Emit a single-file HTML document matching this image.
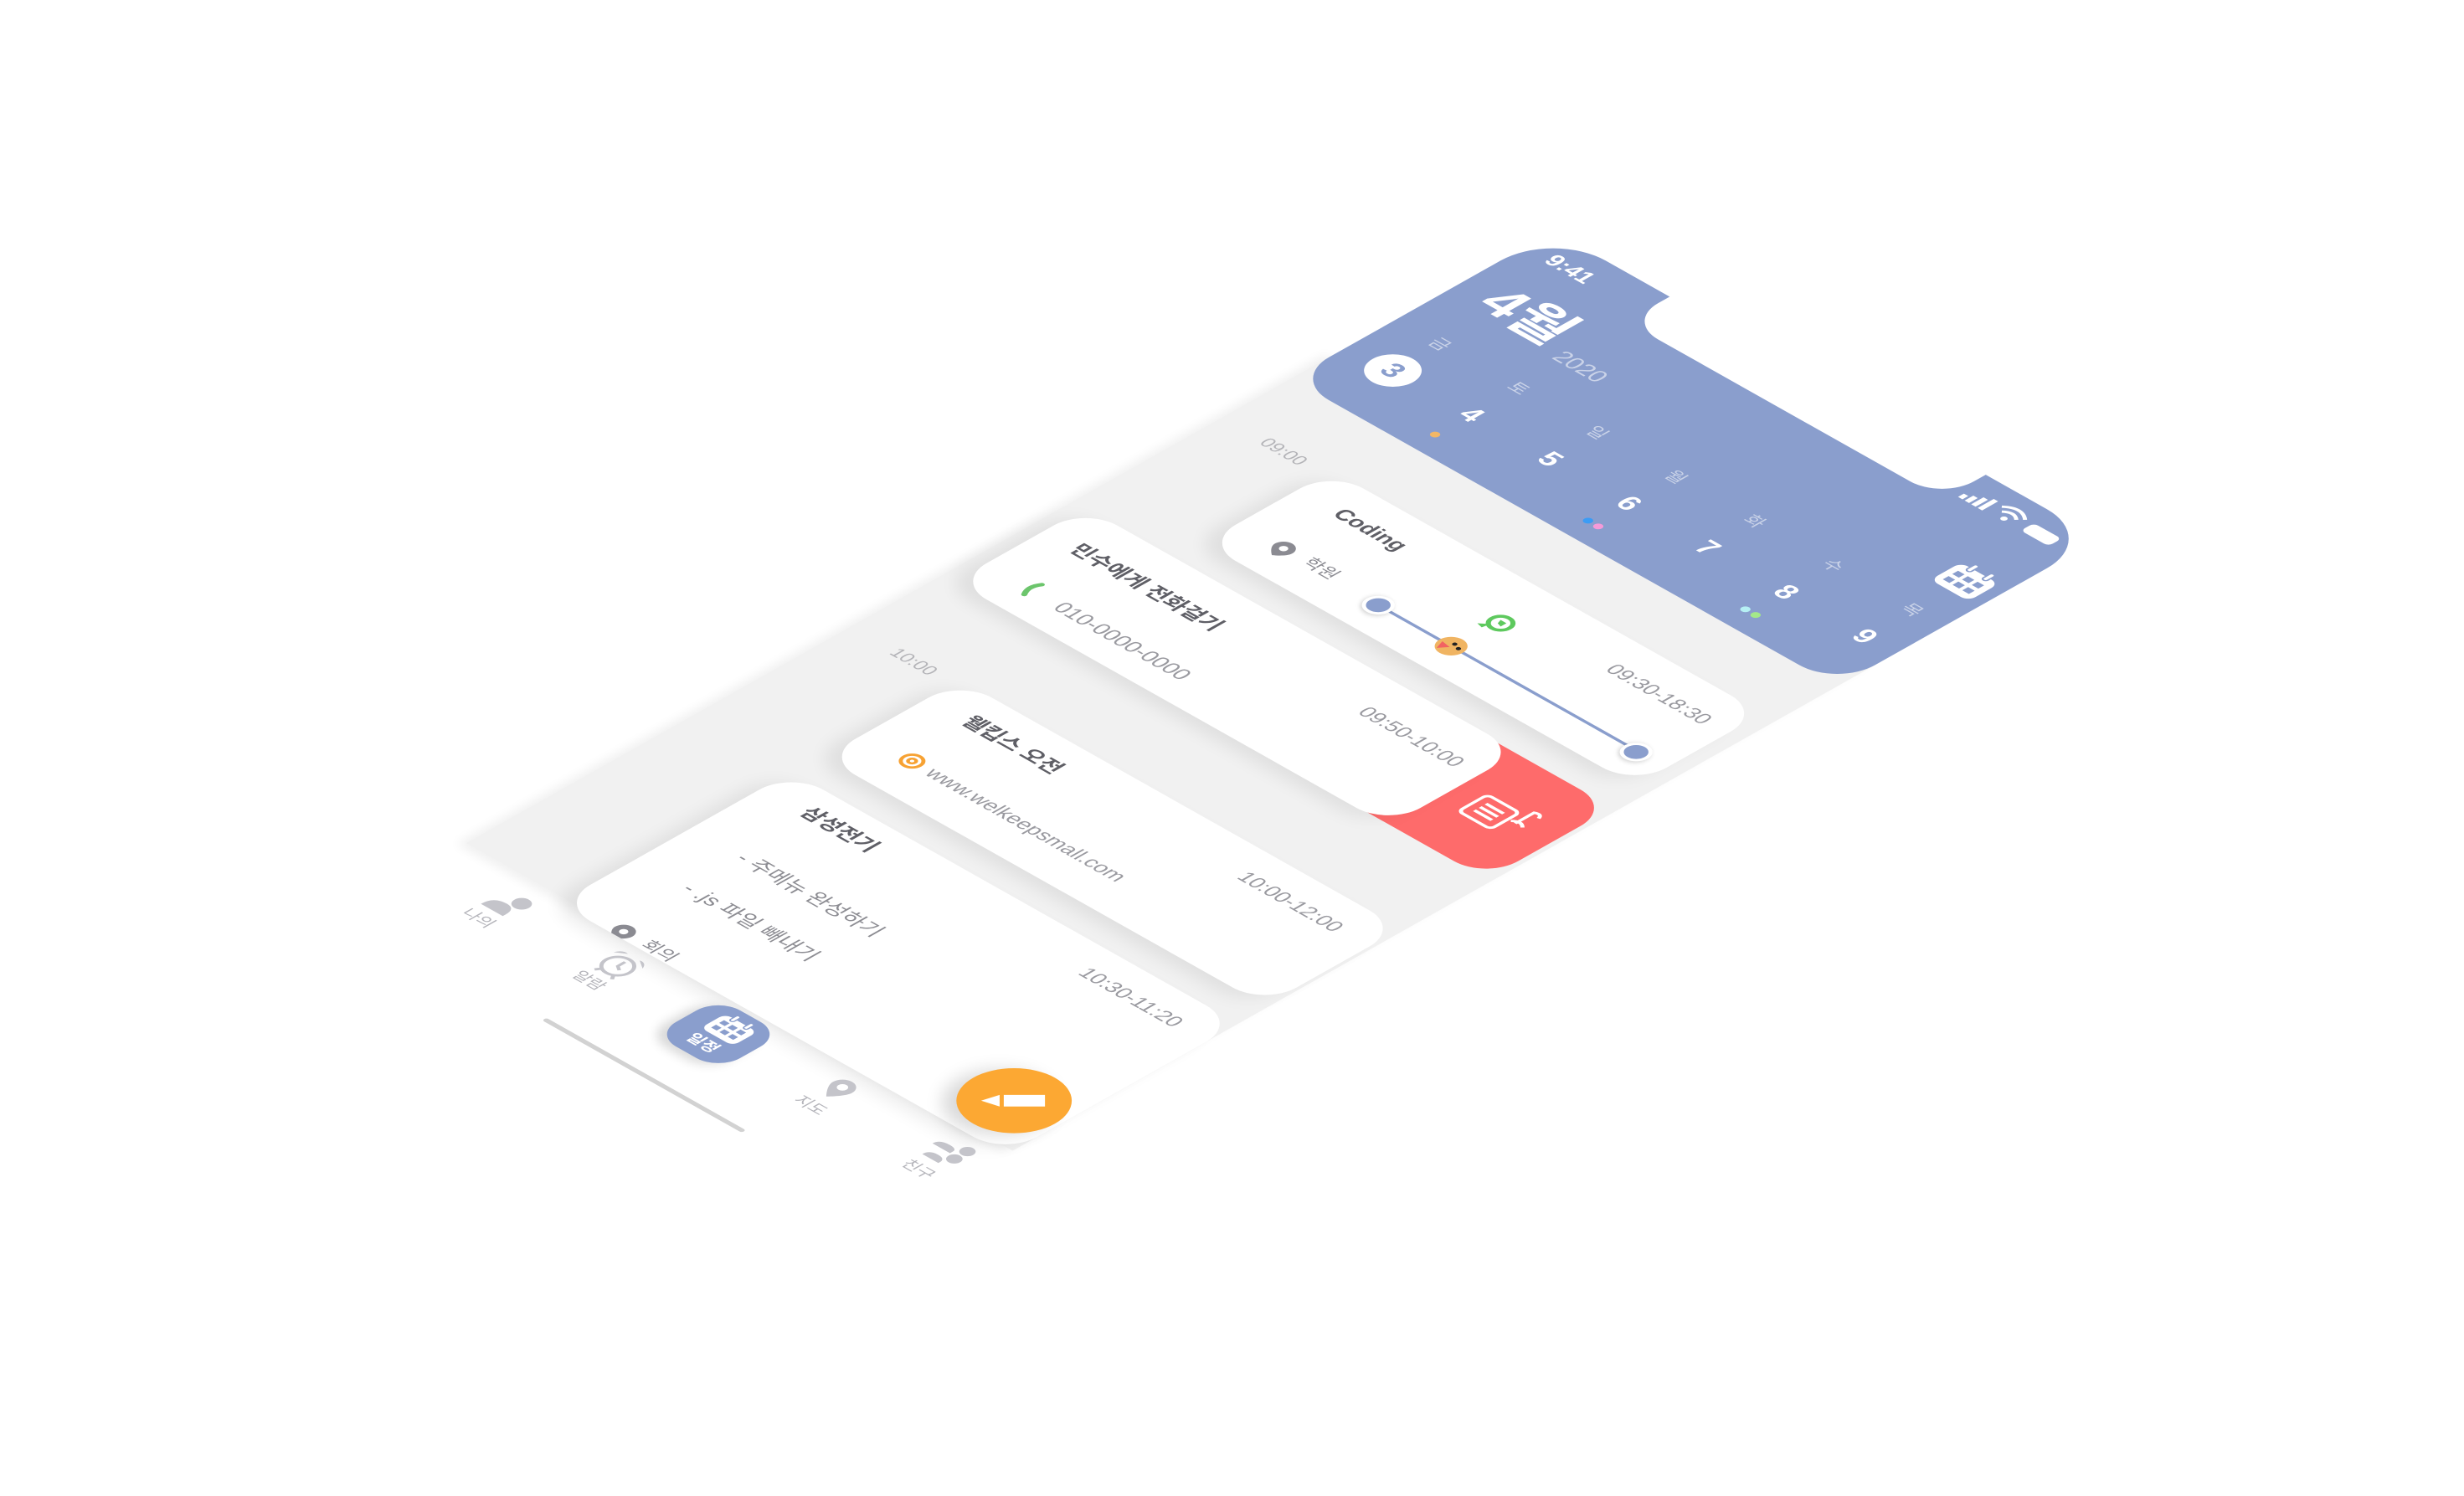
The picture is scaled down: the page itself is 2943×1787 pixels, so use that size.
<!DOCTYPE html>
<html><head><meta charset="utf-8">
<style>
html,body{margin:0;padding:0;background:#fff;}
body{width:2943px;height:1787px;position:relative;overflow:hidden;font-family:"Liberation Sans","Noto Sans CJK KR",sans-serif;}
#ph{position:absolute;left:0;top:0;width:375px;height:812px;transform-origin:0 0;transform:matrix(1.74,0.98,-1.74,0.98,1855,276);}
.a{position:absolute;}
.gray{left:0;top:150px;width:375px;height:596px;background:#f1f1f1;box-shadow:-3px 4px 6px rgba(0,0,0,.06);}
.hdr{left:0;top:0;width:375px;height:180px;background:#8a9ecd;border-radius:36px 36px 26px 26px;}
.notch{left:80px;top:-2px;width:217px;height:32px;background:#fff;border-radius:0 0 22px 22px;}
.card{background:#fff;border-radius:22px;box-shadow:-5px 7px 10px rgba(0,0,0,.07);overflow:hidden;}
.t{position:absolute;white-space:nowrap;line-height:1;}
.c{transform:translate(-50%,-50%);}
.wd{color:rgba(255,255,255,.55);font-size:11px;}
.dn{color:#fff;font-size:17px;font-weight:bold;}
.dot{position:absolute;width:5px;height:5px;border-radius:50%;}
.tt{color:#5f5f66;font-size:13px;font-weight:bold;}
.tm{color:#9a9aa0;font-size:12.5px;}
.nl{color:#b4b4ba;font-size:10px;}
</style></head><body>
<div id="ph">
  <div class="a gray"></div>
  <div class="a hdr"></div>
  <div class="a notch"></div>
  <div class="t c" style="left:29px;top:17px;color:#fff;font-size:14px;font-weight:bold;">9:41</div>
  <svg class="a" style="left:300px;top:10px" width="18" height="14" viewBox="0 0 18 14"><rect x="1" y="9" width="3" height="4" fill="#fff"/><rect x="5.5" y="7" width="3" height="6" fill="#fff"/><rect x="10" y="4.5" width="3" height="8.5" fill="#fff"/><rect x="14.5" y="2" width="3" height="11" fill="#fff"/></svg>
  <svg class="a" style="left:321px;top:9px" width="18" height="14" viewBox="0 0 18 14"><path d="M1 5 Q9 -2 17 5" stroke="#fff" stroke-width="2" fill="none"/><path d="M4 8 Q9 3.5 14 8" stroke="#fff" stroke-width="2" fill="none"/><circle cx="9" cy="11.5" r="1.8" fill="#fff"/></svg>
  <div class="a" style="left:343px;top:13px;width:19px;height:9px;background:#fff;border-radius:3px;"></div>
  <div class="t" style="left:18px;top:44px;color:#fff;font-size:34px;font-weight:bold;">4월</div>
  <div class="t c" style="left:92px;top:73px;color:rgba(255,255,255,.55);font-size:14px;">2020</div>
  <svg class="a" style="left:340px;top:57px" width="30" height="28" viewBox="0 0 30 28"><rect x="2" y="5" width="26" height="21" rx="5" fill="#fff"/><rect x="8" y="1" width="3" height="7" rx="1.5" fill="#fff" stroke="#8a9ecd" stroke-width="1"/><rect x="19" y="1" width="3" height="7" rx="1.5" fill="#fff" stroke="#8a9ecd" stroke-width="1"/><g fill="#8a9ecd"><rect x="6" y="11" width="4.5" height="4"/><rect x="12.7" y="11" width="4.5" height="4"/><rect x="19.4" y="11" width="4.5" height="4"/><rect x="6" y="17.5" width="4.5" height="4"/><rect x="12.7" y="17.5" width="4.5" height="4"/><rect x="19.4" y="17.5" width="4.5" height="4"/></g></svg>
  <div class="t c wd" style="left:30px;top:109px;">금</div>
  <div class="t c wd" style="left:84px;top:109px;">토</div>
  <div class="t c wd" style="left:138px;top:109px;">일</div>
  <div class="t c wd" style="left:192px;top:109px;">월</div>
  <div class="t c wd" style="left:246px;top:109px;">화</div>
  <div class="t c wd" style="left:300px;top:109px;">수</div>
  <div class="t c wd" style="left:354px;top:109px;">목</div>
  <div class="a" style="left:16px;top:126px;width:28px;height:28px;border-radius:50%;background:#fff;"></div>
  <div class="t c dn" style="left:30px;top:140px;color:#8a9ecd;font-size:17px;">3</div>
  <div class="t c dn" style="left:84px;top:140px;">4</div>
  <div class="t c dn" style="left:138px;top:140px;">5</div>
  <div class="t c dn" style="left:192px;top:140px;">6</div>
  <div class="t c dn" style="left:246px;top:140px;">7</div>
  <div class="t c dn" style="left:300px;top:140px;">8</div>
  <div class="t c dn" style="left:354px;top:140px;">9</div>
  <div class="dot" style="left:81px;top:162px;background:#f2b766;"></div>
  <div class="dot" style="left:186px;top:162px;background:#3b9cf5;"></div>
  <div class="dot" style="left:193px;top:162px;background:#f59ad9;"></div>
  <div class="dot" style="left:294px;top:162px;background:#b6f0f4;"></div>
  <div class="dot" style="left:301px;top:162px;background:#a4e88a;"></div>
  <div class="t c" style="left:42px;top:228px;color:#b4b4b8;font-size:11px;">09:00</div>
  <div class="t c" style="left:43px;top:483px;color:#b4b4b8;font-size:11px;">10:00</div>

  <div class="a card" style="left:70px;top:222px;width:296px;height:88px;">
    <div class="t tt" style="left:27px;top:16px;">Coding</div>
    <div class="t tm" style="right:14px;top:18px;">09:30-18:30</div>
    <svg class="a" style="left:23px;top:57px" width="16" height="16" viewBox="0 0 16 16"><path d="M8 1a6 6 0 0 1 6 6c0 4-6 8-6 8S2 11 2 7a6 6 0 0 1 6-6z" fill="#8b8b92"/><circle cx="8" cy="7" r="2.3" fill="#fff"/></svg>
    <div class="t" style="left:46px;top:59px;color:#8b8b92;font-size:11px;">학원</div>
    <div class="a" style="left:97px;top:65px;width:178px;height:2px;background:#8a9ecd;"></div>
    <div class="a" style="left:90px;top:58px;width:12px;height:12px;border-radius:50%;background:#8a9ecd;border:2px solid #fff;box-shadow:0 1px 3px rgba(0,0,0,.2);"></div>
    <div class="a" style="left:268px;top:59px;width:12px;height:12px;border-radius:50%;background:#8a9ecd;border:2px solid #fff;box-shadow:0 1px 3px rgba(0,0,0,.2);"></div>
    <svg class="a" style="left:139px;top:57px" width="18" height="18" viewBox="0 0 18 18"><circle cx="9" cy="9" r="8" fill="#f0b462"/><path d="M3 9 L9 10 L5 15z" fill="#f26262"/><circle cx="9" cy="6.5" r="1.3" fill="#222"/><circle cx="13" cy="8" r="1.3" fill="#222"/></svg>
    <svg class="a" style="left:139px;top:27px" width="20" height="20" viewBox="0 0 20 20"><circle cx="12" cy="8" r="6" fill="#fff" stroke="#5ec95e" stroke-width="2.5"/><path d="M4 16 L9 12 L8 17z" fill="#5ec95e"/><path d="M10 6 L14 6 L14 10 L11 9z" fill="#5ec95e"/></svg>
  </div>

  <div class="a" style="left:240px;top:331px;width:132px;height:87px;background:#fe6b6b;border-radius:22px;"></div>
  <svg class="a" style="left:318px;top:356px" width="40" height="36" viewBox="0 0 40 36"><rect x="3" y="10" width="22" height="20" rx="3" fill="none" stroke="#fff" stroke-width="2"/><path d="M8 16h12M8 20h12M8 24h12" stroke="#fff" stroke-width="2"/><path d="M30 18 L30 5 Q34 3 35 7" stroke="#fff" stroke-width="2" fill="none"/><path d="M27 18 Q31 14 35 18" stroke="#fff" stroke-width="2" fill="none"/></svg>
  <div class="a card" style="left:8px;top:329px;width:298px;height:90px;">
    <div class="t tt" style="left:20px;top:21px;">민수에게 전화걸기</div>
    <div class="t tm" style="right:13px;top:22px;">09:50-10:00</div>
    <svg class="a" style="left:27px;top:60px" width="16" height="16" viewBox="0 0 16 16"><path d="M5 2 Q1 8 5 14" stroke="#6cc56c" stroke-width="3" fill="none" stroke-linecap="round"/></svg>
    <div class="t tm" style="left:50px;top:62px;font-size:13px;">010-0000-0000</div>
  </div>

  <div class="a card" style="left:70px;top:477px;width:303px;height:94px;">
    <div class="t tt" style="left:26px;top:15px;">웰킵스 오전</div>
    <div class="t tm" style="right:21px;top:16px;">10:00-12:00</div>
    <svg class="a" style="left:26px;top:59px" width="14" height="14" viewBox="0 0 14 14"><circle cx="7" cy="7" r="5.5" fill="none" stroke="#f7a233" stroke-width="2"/><circle cx="7" cy="7" r="2" fill="none" stroke="#f7a233" stroke-width="1.8"/></svg>
    <div class="t tm" style="left:45px;top:60px;">www.welkeepsmall.com</div>
  </div>

  <div class="a card" style="left:68px;top:591px;width:307px;height:160px;">
    <div class="t tt" style="left:28px;top:12px;">삼성전기</div>
    <div class="t tm" style="right:20px;top:15px;">10:30-11:20</div>
    <div class="t tm" style="left:34px;top:62px;color:#8d8d93;font-size:13px;">- 주메뉴 완성하기</div>
    <div class="t tm" style="left:34px;top:99px;color:#8d8d93;font-size:13px;">- .js 파일 빼내기</div>
    <svg class="a" style="left:32px;top:148px" width="16" height="16" viewBox="0 0 16 16"><path d="M8 1a6 6 0 0 1 6 6c0 4-6 8-6 8S2 11 2 7a6 6 0 0 1 6-6z" fill="#8b8b92"/><circle cx="8" cy="7" r="2.3" fill="#fff"/></svg>
    <div class="t" style="left:54px;top:150px;color:#8b8b92;font-size:11px;">회의</div>
  </div>

  <div class="a" style="left:317px;top:687px;width:56px;height:56px;border-radius:50%;background:#fca833;box-shadow:-4px 6px 10px rgba(0,0,0,.15);"></div>
  <svg class="a" style="left:325px;top:705px;transform:rotate(-45deg);" width="40" height="20" viewBox="0 0 40 20"><path d="M4 10 L13 5 L13 15z" fill="#fff"/><rect x="15" y="5" width="20" height="10" fill="#fff"/></svg>

  <svg class="a" style="left:40px;top:758px" width="24" height="22" viewBox="0 0 24 22"><circle cx="16" cy="6" r="5" fill="#c4c4ca"/><path d="M2 20 Q2 11 11 11 Q17 11 17 18 L17 20z" fill="#c4c4ca"/></svg>
  <div class="t c nl" style="left:50px;top:789px;">나의</div>
  <svg class="a" style="left:114px;top:755px" width="26" height="26" viewBox="0 0 26 26"><circle cx="13" cy="14" r="8" fill="none" stroke="#c4c4ca" stroke-width="2"/><path d="M13 9v5l3 2" stroke="#c4c4ca" stroke-width="1.8" fill="none"/><path d="M3 7 Q5 2 9 3z M23 7 Q21 2 17 3z" fill="#c4c4ca"/><path d="M7 24l2-3M19 24l-2-3" stroke="#c4c4ca" stroke-width="2"/></svg>
  <div class="t c nl" style="left:126px;top:789px;">알람</div>
  <div class="a" style="left:181px;top:754px;width:44px;height:44px;border-radius:15px;background:#8a9ecd;box-shadow:-3px 4px 6px rgba(0,0,0,.15);"></div>
  <svg class="a" style="left:191px;top:757px" width="26" height="22" viewBox="0 0 30 26"><rect x="2" y="5" width="26" height="20" rx="5" fill="#fff"/><rect x="8" y="1" width="3" height="7" rx="1.5" fill="#fff" stroke="#8a9ecd"/><rect x="19" y="1" width="3" height="7" rx="1.5" fill="#fff" stroke="#8a9ecd"/><g fill="#8a9ecd"><rect x="6" y="10" width="4.5" height="4"/><rect x="12.7" y="10" width="4.5" height="4"/><rect x="19.4" y="10" width="4.5" height="4"/><rect x="6" y="16.5" width="4.5" height="4"/><rect x="12.7" y="16.5" width="4.5" height="4"/><rect x="19.4" y="16.5" width="4.5" height="4"/></g></svg>
  <div class="t c" style="left:203px;top:788px;color:#fff;font-size:10px;font-weight:bold;">일정</div>
  <svg class="a" style="left:269px;top:758px" width="18" height="20" viewBox="0 0 16 18"><path d="M8 1a6 6 0 0 1 6 6c0 4-6 10-6 10S2 11 2 7a6 6 0 0 1 6-6z" fill="#c4c4ca"/><circle cx="8" cy="7" r="2.5" fill="#fff"/></svg>
  <div class="t c nl" style="left:278px;top:789px;">지도</div>
  <svg class="a" style="left:340px;top:757px" width="28" height="24" viewBox="0 0 28 24"><circle cx="20" cy="5" r="4" fill="#c4c4ca"/><circle cx="20" cy="14" r="4" fill="#c4c4ca"/><path d="M3 12 Q3 7 10 7 Q15 7 15 10 L15 12z" fill="#c4c4ca"/><path d="M6 22 Q6 17 12 17 Q17 17 17 21 L17 22z" fill="#c4c4ca"/></svg>
  <div class="t c nl" style="left:354px;top:791px;">친구</div>
  <div class="a" style="left:134px;top:825px;width:137px;height:3px;border-radius:2px;background:#d2d2d2;"></div>
</div>
</body></html>
